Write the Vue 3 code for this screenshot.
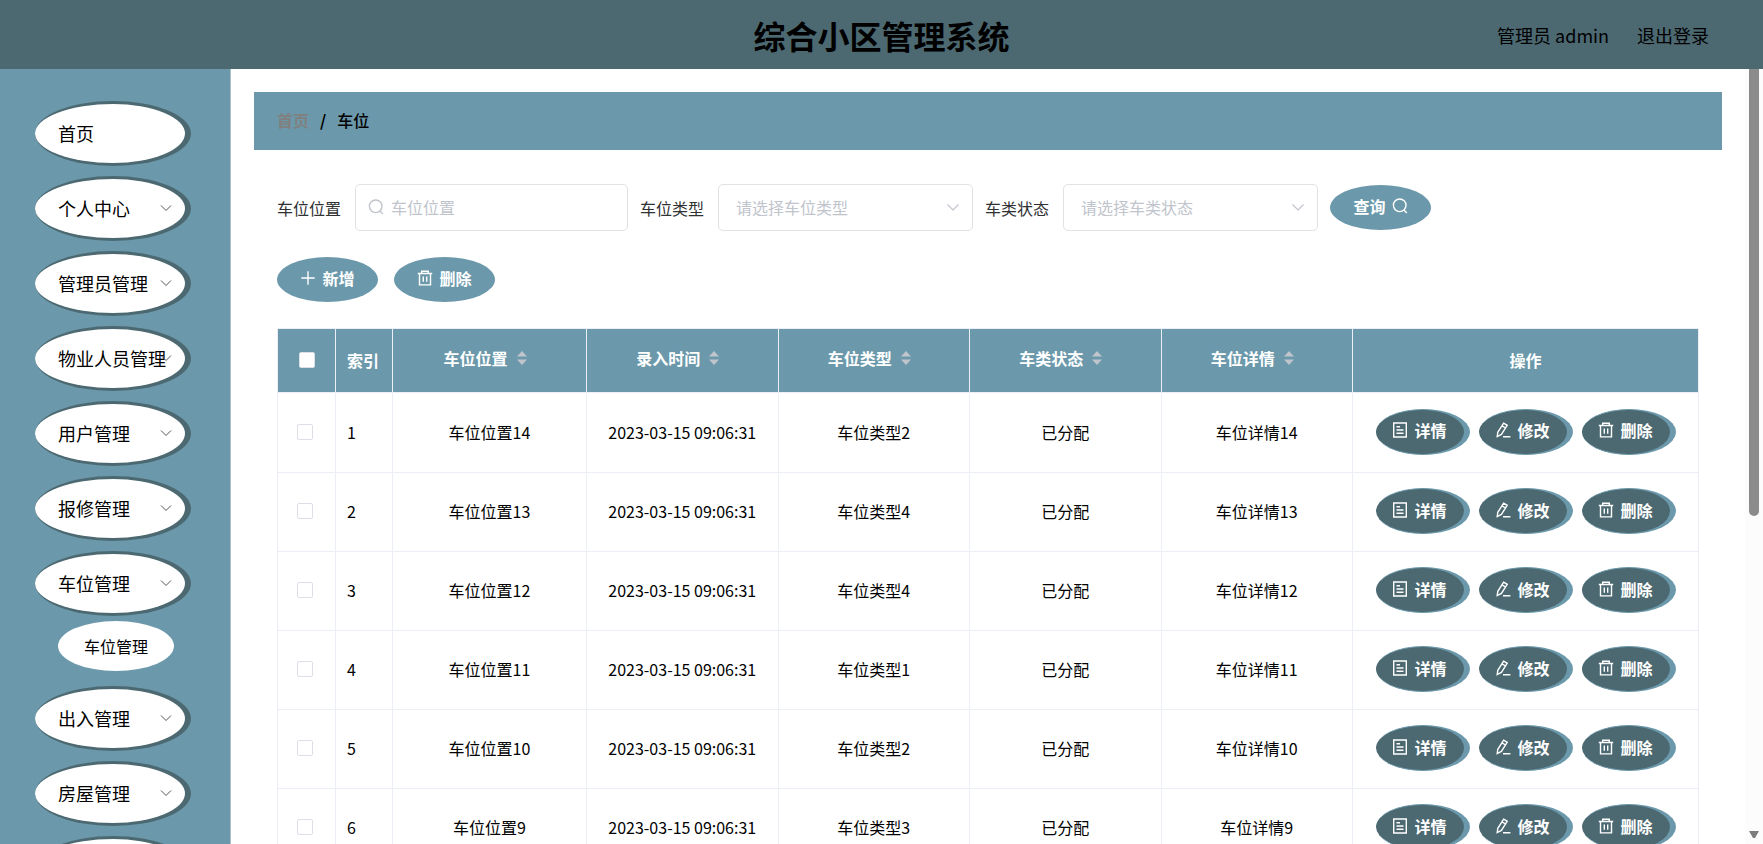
<template>
  <div class="layout">
    <header class="header">
      <h1 class="title">综合小区管理系统</h1>
      <div class="user">
        <span>管理员 admin</span>
        <a href="#" class="logout">退出登录</a>
      </div>
    </header>

    <div class="body">
      <nav class="sidebar">
        <div v-for="item in menus" :key="item.name" class="menu-group">
          <button type="button" class="menu-item">
            <span class="menu-name">{{ item.name }}</span>
            <svg v-if="item.name !== '首页'" class="menu-arrow" viewBox="0 0 12 12">
              <path d="M1 3.5 6 8.5 11 3.5" />
            </svg>
          </button>
          <a v-for="sub in item.children" :key="sub" href="#" class="sub-item">{{ sub }}</a>
        </div>
      </nav>

      <main class="main">
        <div class="breadcrumb">
          <a href="#" class="crumb-home">首页</a>
          <span class="crumb-sep">/</span>
          <span>车位</span>
        </div>

        <div class="content">
          <form class="filters" @submit.prevent>
            <div class="field">
              <label for="position">车位位置</label>
              <div class="control wide">
                <svg class="icon prefix" viewBox="0 0 16 16"><path :d="icons.search" /></svg>
                <input id="position" v-model="query.position" type="text" placeholder="车位位置" />
              </div>
            </div>
            <div class="field">
              <label for="type">车位类型</label>
              <div class="control">
                <select id="type" v-model="query.type">
                  <option value="">请选择车位类型</option>
                  <option v-for="t in types" :key="t">{{ t }}</option>
                </select>
                <svg class="select-arrow" viewBox="0 0 14 14"><path d="M1.5 4.5 7 10 12.5 4.5" /></svg>
              </div>
            </div>
            <div class="field">
              <label for="status">车类状态</label>
              <div class="control">
                <select id="status" v-model="query.status">
                  <option value="">请选择车类状态</option>
                  <option>已分配</option>
                </select>
                <svg class="select-arrow" viewBox="0 0 14 14"><path d="M1.5 4.5 7 10 12.5 4.5" /></svg>
              </div>
            </div>
            <button type="submit" class="btn">
              查询
              <svg class="icon" viewBox="0 0 16 16"><path :d="icons.search" /></svg>
            </button>
          </form>

          <div class="actions">
            <button type="button" class="btn">
              <svg class="icon" viewBox="0 0 16 16"><path :d="icons.plus" /></svg>
              新增
            </button>
            <button type="button" class="btn">
              <svg class="icon" viewBox="0 0 16 16"><path :d="icons.remove" /></svg>
              删除
            </button>
          </div>

          <table class="table">
            <colgroup>
              <col class="col-check" />
              <col class="col-index" />
              <col v-for="c in columns" :key="c.prop" :class="'col-' + c.prop" />
              <col class="col-ops" />
            </colgroup>
            <thead>
              <tr>
                <th><input type="checkbox" class="check" aria-label="全选" /></th>
                <th class="index">索引</th>
                <th v-for="c in columns" :key="c.prop">
                  <div class="sortable">
                    {{ c.label }}
                    <svg class="caret" viewBox="0 0 12 16">
                      <path d="M6 1 11 6.5H1ZM6 15 1 9.5H11Z" />
                    </svg>
                  </div>
                </th>
                <th>操作</th>
              </tr>
            </thead>
            <tbody>
              <tr v-for="(row, i) in rows" :key="row.no">
                <td class="check-cell"><input type="checkbox" class="check" :aria-label="'车位位置' + row.no" /></td>
                <td class="index">{{ i + 1 }}</td>
                <td>车位位置{{ row.no }}</td>
                <td>2023-03-15 09:06:31</td>
                <td>{{ row.type }}</td>
                <td>已分配</td>
                <td>车位详情{{ row.no }}</td>
                <td>
                  <div class="ops">
                    <button v-for="op in ops" :key="op.label" type="button" class="btn-op">
                      <svg class="icon" viewBox="0 0 16 16"><path :d="icons[op.icon]" /></svg>
                      {{ op.label }}
                    </button>
                  </div>
                </td>
              </tr>
            </tbody>
          </table>
        </div>
      </main>

      <div class="scrollbar">
        <div class="thumb"></div>
        <svg class="scroll-down" viewBox="0 0 10 8"><path d="M0 0H10L6 7H4Z" /></svg>
      </div>
    </div>
  </div>
</template>

<script setup>
import { reactive } from "vue";

const menus = [
  { name: "首页" },
  { name: "个人中心" },
  { name: "管理员管理" },
  { name: "物业人员管理" },
  { name: "用户管理" },
  { name: "报修管理" },
  { name: "车位管理", children: ["车位管理"] },
  { name: "出入管理" },
  { name: "房屋管理" },
  { name: "" },
];

const query = reactive({ position: "", type: "", status: "" });
const types = ["车位类型1", "车位类型2", "车位类型3", "车位类型4"];

const columns = [
  { prop: "position", label: "车位位置" },
  { prop: "time", label: "录入时间" },
  { prop: "type", label: "车位类型" },
  { prop: "status", label: "车类状态" },
  { prop: "detail", label: "车位详情" },
];

const rows = [
  { no: 14, type: "车位类型2" },
  { no: 13, type: "车位类型4" },
  { no: 12, type: "车位类型4" },
  { no: 11, type: "车位类型1" },
  { no: 10, type: "车位类型2" },
  { no: 9, type: "车位类型3" },
];

const ops = [
  { label: "详情", icon: "detail" },
  { label: "修改", icon: "edit" },
  { label: "删除", icon: "remove" },
];

const icons = {
  search: "M14 7.3A6.3 6.3 0 1 1 1.4 7.3A6.3 6.3 0 1 1 14 7.3M12.2 12.2 14.8 15",
  plus: "M8 1.3V14.7M1.3 8H14.7",
  remove: "M.8 3.5H15.2M4.7 3.5V1.2H11.3V3.5M2.5 3.5V14.9H13.5V3.5M6.3 6.5V11.8M9.7 6.5V11.8",
  detail: "M1.7 1H14.3V15H1.7ZM4.5 4.8H8M4.5 8H11.5M4.5 11.2H11.5",
  edit: "M8.6 1.2 12.2 3.3 6.4 12.4 2.2 14.6 2.8 10.3ZM7 3.9 10.5 6M8 14.8H15.4",
};
</script>

<style>
body {
  margin: 0;
  background: #fff;
}
</style>

<style scoped>
.layout {
  display: flex;
  flex-direction: column;
  height: 100vh;
  overflow: hidden;
  font-family: "Noto Sans CJK SC", sans-serif;
  font-size: 16px;
  line-height: 24px;
  color: #000;
}
.layout * {
  box-sizing: border-box;
}
button,
input,
select {
  font: inherit;
}
button {
  cursor: pointer;
}
a {
  color: inherit;
  text-decoration: none;
}

.header {
  flex: none;
  display: grid;
  grid-template-columns: 1fr auto 1fr;
  align-items: center;
  height: 69px;
  padding: 0 54px;
  background: #4c6972;
}
.title {
  grid-column: 2;
  margin: 0;
  font-size: 32px;
  line-height: 48px;
  font-weight: 700;
}
.user {
  display: flex;
  justify-content: flex-end;
  gap: 28px;
  font-size: 18px;
}

.body {
  flex: 1;
  min-height: 0;
  display: flex;
}
.sidebar {
  flex: none;
  width: 231px;
  padding: 32px 39px 0 35px;
  overflow: hidden;
  background: #6b99ab;
  border-right: 1px solid #a9c2cd;
}
.menu-group {
  display: flow-root;
  margin-bottom: 10px;
}
.menu-item {
  display: flex;
  align-items: center;
  justify-content: space-between;
  width: 100%;
  height: 65px;
  padding: 0 13px 2px 23px;
  background: #fff;
  border: solid #4c6972;
  border-width: 3px 6px 3px 0;
  border-radius: 50%;
  font-size: 18px;
  white-space: nowrap;
}
.menu-name {
  flex: 1;
  width: 0;
  text-align: left;
}
.menu-arrow {
  flex: none;
  width: 12px;
  height: 12px;
  fill: none;
  stroke: #50545a;
}
.sub-item {
  display: grid;
  place-items: center;
  width: 116px;
  height: 50px;
  margin: 5px 0 5px 23px;
  background: #fff;
  border-radius: 50%;
}

.main {
  flex: 1;
  min-width: 0;
  padding: 23px;
  overflow: hidden;
}
.breadcrumb {
  display: flex;
  align-items: center;
  gap: 11px;
  height: 58px;
  padding: 0 23px 2px;
  background: #6b99ab;
  font-weight: 500;
}
.crumb-home {
  color: #808080;
  font-weight: 700;
}
.crumb-sep {
  font-weight: 700;
}
.content {
  padding: 34px 23px 0;
}

.filters {
  display: flex;
  align-items: center;
  gap: 12px;
}
.field {
  display: flex;
  align-items: center;
  gap: 14px;
  color: #303133;
  white-space: nowrap;
}
.control {
  position: relative;
  width: 255px;
  height: 47px;
}
.control.wide {
  width: 273px;
}
.control input,
.control select {
  width: 100%;
  height: 100%;
  padding: 0 17px 2px;
  color: #c0c4cc;
  background: #fff;
  border: 1px solid #e0e2e6;
  border-radius: 5px;
  appearance: none;
  outline: none;
}
.control input {
  padding-left: 35px;
  color: #606266;
}
.control input::placeholder {
  color: #c0c4cc;
}
.icon {
  flex: none;
  width: 16px;
  height: 16px;
  fill: none;
  stroke: currentColor;
  stroke-width: 1.4;
}
.prefix {
  position: absolute;
  left: 13px;
  top: 15px;
  color: #c0c4cc;
}
.select-arrow {
  position: absolute;
  right: 13px;
  top: 16px;
  width: 14px;
  height: 14px;
  fill: none;
  stroke: #c0c4cc;
  stroke-width: 1.2;
  pointer-events: none;
}

.btn {
  display: flex;
  align-items: center;
  justify-content: center;
  gap: 6px;
  width: 101px;
  height: 45px;
  padding: 0 0 4px;
  color: #fff;
  background: #6b99ab;
  border: 0;
  border-radius: 50%;
  font-weight: 700;
}
.actions {
  display: flex;
  gap: 16px;
  margin: 26px 0;
}

.table {
  width: 100%;
  table-layout: fixed;
  border-collapse: collapse;
  text-align: center;
}
.col-check {
  width: 58px;
}
.col-index {
  width: 57px;
}
.col-position {
  width: 194px;
}
.col-ops {
  width: 346px;
}
.table th,
.table td {
  padding: 0 0 2px;
  border: 1px solid #ebeef5;
}
.table th {
  height: 64px;
  color: #fff;
  background: #6b99ab;
  font-weight: 700;
}
.table td {
  height: 79px;
}
.table tbody tr:first-child td {
  height: 80px;
}
.table .index {
  padding-left: 11px;
  text-align: left;
}
.table .check-cell {
  padding-right: 4px;
}
.sortable {
  display: flex;
  align-items: center;
  justify-content: center;
  gap: 8px;
  padding: 0 8px 4px 0;
}
.caret {
  width: 12px;
  height: 16px;
  fill: #c0c4cc;
}
.check {
  display: block;
  width: 16px;
  height: 16px;
  margin: 0 auto;
  background: #fff;
  border: 1px solid #dcdfe6;
  border-radius: 2px;
  appearance: none;
}
.check:checked {
  background: #4c6972;
}

.ops {
  display: flex;
  justify-content: center;
  gap: 9px;
}
.btn-op {
  display: flex;
  align-items: center;
  justify-content: center;
  gap: 6px;
  width: 94px;
  height: 46px;
  padding: 0 0 3px;
  color: #fff;
  background: #4c6972;
  border: solid #6b99ab;
  border-width: 1px 6px 1px 0;
  border-radius: 50%;
  font-weight: 700;
}

.scrollbar {
  flex: none;
  display: flex;
  flex-direction: column;
  justify-content: space-between;
  width: 18px;
  padding: 0 4px 5px;
  background: #fcfcfc;
}
.thumb {
  height: 58%;
  background: #8b8b8b;
  border-radius: 0 0 5px 5px;
}
.scroll-down {
  width: 10px;
  height: 8px;
  fill: #7d7d7d;
}
</style>
